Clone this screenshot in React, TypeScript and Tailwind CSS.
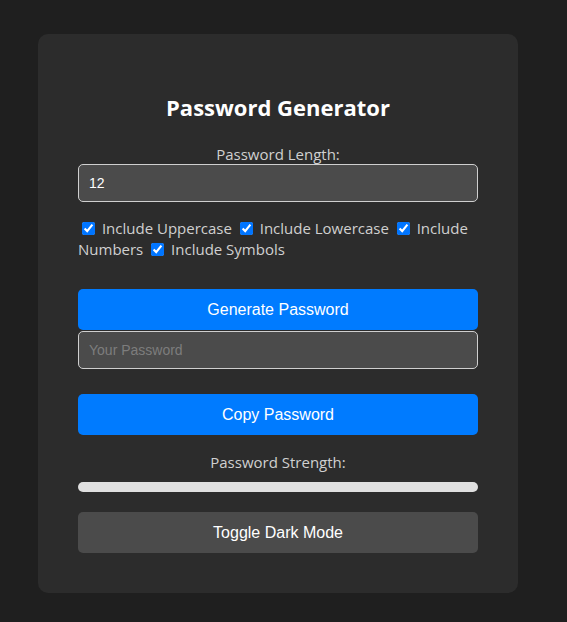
import React from "react";

export default function App() {
  const seg = { fontFamily: '"Open Sans", "Noto Sans", sans-serif' };
  const ari = { fontFamily: '"Liberation Sans", Arial, sans-serif' };
  return (
    <div className="min-h-[622px] w-full bg-[#1f1f1f] pt-[34px]" style={seg}>
      <div className="ml-[38px] w-[480px] rounded-[10px] bg-[#2c2c2c] px-[40px] pb-[40px] pt-[57px]">
        <h1 className="text-center text-[22px] font-bold leading-[32px] text-white">Password Generator</h1>
        <div className="mt-[21px] text-center text-[15px] leading-[20px] text-[#d0d0d0]">Password Length:</div>
        <input
          type="number"
          defaultValue={12}
          className="block h-[38px] w-full rounded-[5px] border border-[#cfcfcf] bg-[#4b4b4b] px-[10px] text-[14px] text-white outline-none"
          style={ari}
        />
        <div className="mt-[16px] text-[15px] leading-[21px] text-[#d0d0d0]">
          <label><input type="checkbox" defaultChecked className="mx-[3px] ml-[4px] align-[-1px]" /> Include Uppercase</label>{" "}
          <label><input type="checkbox" defaultChecked className="mx-[3px] ml-[4px] align-[-1px]" /> Include Lowercase</label>{" "}
          <label><input type="checkbox" defaultChecked className="mx-[3px] ml-[4px] align-[-1px]" /> Include Numbers</label>{" "}
          <label><input type="checkbox" defaultChecked className="mx-[3px] ml-[4px] align-[-1px]" /> Include Symbols</label>
        </div>
        <button
          className="mt-[29px] block h-[41px] w-full rounded-[5px] bg-[#007bff] text-[16px] text-white"
          style={ari}
        >
          Generate Password
        </button>
        <input
          type="text"
          readOnly
          placeholder="Your Password"
          className="mt-[1px] block h-[38px] w-full rounded-[5px] border border-[#cfcfcf] bg-[#4b4b4b] px-[10px] text-[14px] text-white outline-none placeholder:text-[#7d7d7d]"
          style={ari}
        />
        <button
          className="mt-[25px] block h-[41px] w-full rounded-[5px] bg-[#007bff] text-[16px] text-white"
          style={ari}
        >
          Copy Password
        </button>
        <div className="mt-[17px] text-center text-[15px] leading-[20px] text-[#d0d0d0]">Password Strength:</div>
        <div className="mt-[10px] h-[10px] w-full rounded-full bg-[#e0e0e0]" />
        <button
          className="mt-[20px] block h-[41px] w-full rounded-[5px] bg-[#4b4b4b] text-[16px] text-white"
          style={ari}
        >
          Toggle Dark Mode
        </button>
      </div>
    </div>
  );
}
